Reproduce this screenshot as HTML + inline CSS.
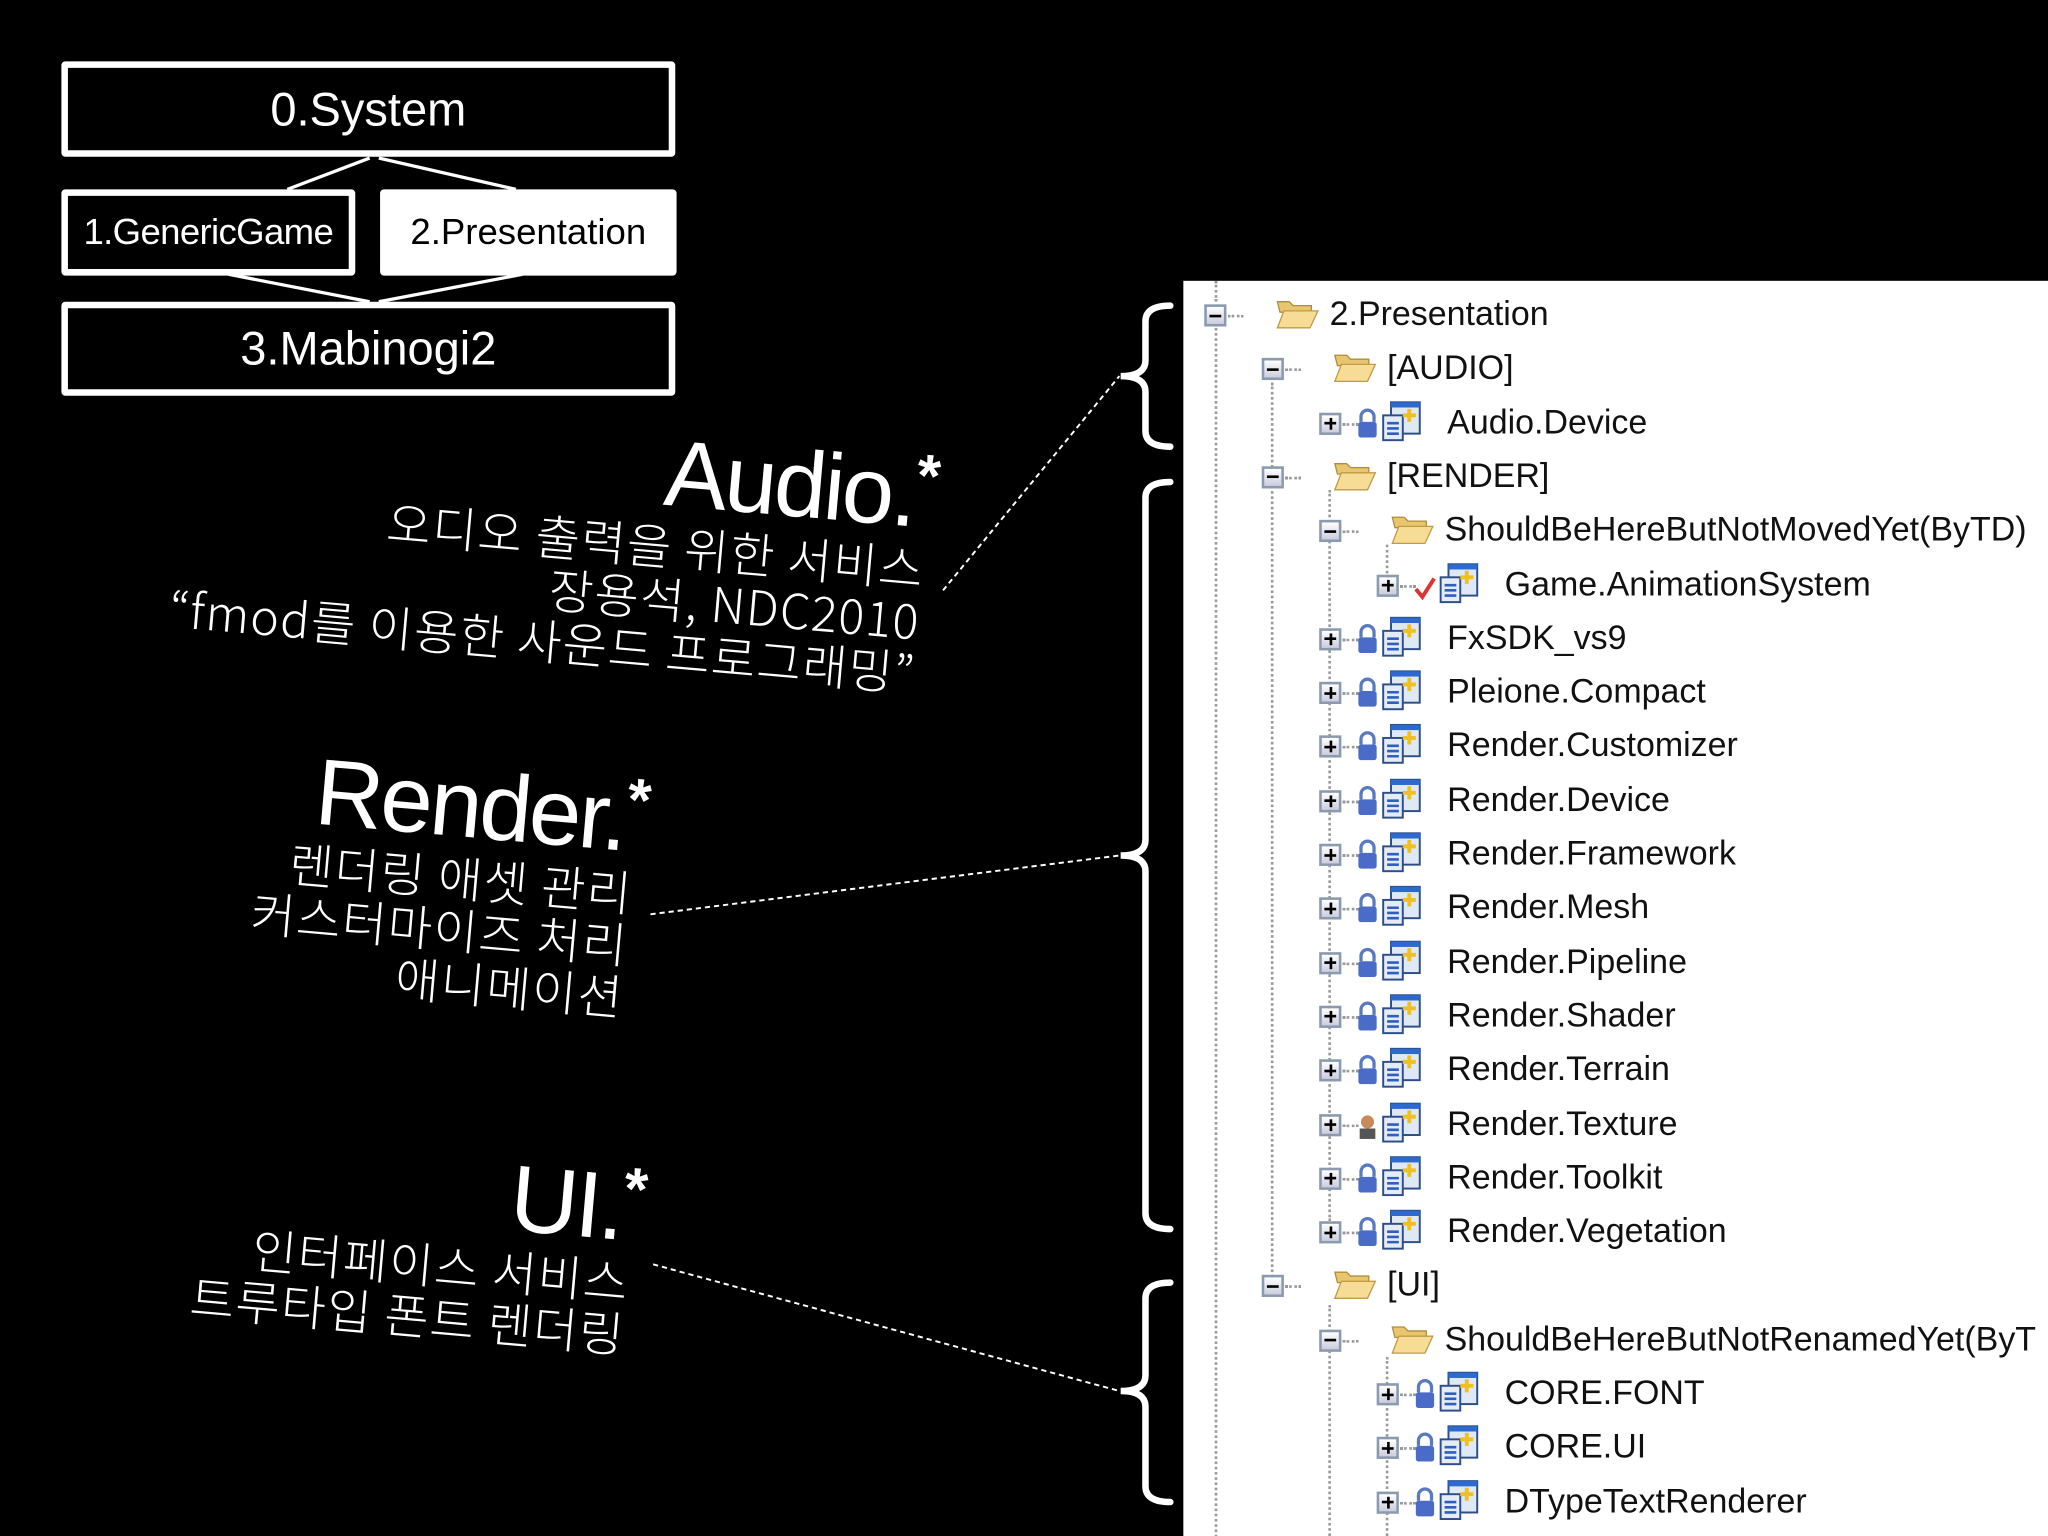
<!DOCTYPE html>
<html><head><meta charset="utf-8"><style>
html,body{margin:0;padding:0;background:#000;width:2048px;height:1536px;overflow:hidden}
#s{position:absolute;left:0;top:0;width:1568px;height:1176px;transform:scale(1.306122);transform-origin:0 0;font-family:"Liberation Sans","Noto Sans CJK KR",sans-serif;color:#fff}
.box{position:absolute;box-sizing:border-box;border:5px solid #fff;border-radius:3px;display:flex;align-items:center;justify-content:center;white-space:nowrap}
.blk{position:absolute;text-align:right;white-space:nowrap;transform-origin:100% 50%}
.ko{font-family:"Noto Sans CJK KR","Liberation Sans",sans-serif;font-weight:300;font-size:37px;line-height:40px;letter-spacing:1px}
.ttl{font-size:72px;font-weight:normal;line-height:68px;letter-spacing:-2px}
.st{font-size:46px;font-weight:bold;vertical-align:24px}
#tree{position:absolute;left:906px;top:215px;width:662px;height:961px;background:#fff;overflow:hidden;color:#111;font-size:26px}
.row{position:absolute;height:30px;line-height:30px;white-space:nowrap}
.ex{position:absolute;width:17px;height:17px;box-sizing:border-box;border:2px solid #8a9bb0;background:linear-gradient(#fff,#ccd);}
.ex::before{content:"";position:absolute;left:2px;right:2px;top:5.5px;height:2px;background:#000}
.ex.p::after{content:"";position:absolute;top:2px;bottom:2px;left:5.5px;width:2px;background:#000}
.vl{position:absolute;border-left:2px dotted #999;width:0}
.hl{position:absolute;border-top:2px dotted #999;height:0;width:12px}
</style></head><body><div id="s">
<div class="box" style="left:47px;top:47px;width:470px;height:73px;font-size:36px">0.System</div>
<div class="box" style="left:47px;top:145px;width:225px;height:66px;font-size:28px;letter-spacing:-0.5px">1.GenericGame</div>
<div class="box" style="left:291px;top:145px;width:227px;height:66px;font-size:28px;background:#fff;color:#000">2.Presentation</div>
<div class="box" style="left:47px;top:231px;width:470px;height:72px;font-size:36px">3.Mabinogi2</div>
<svg style="position:absolute;left:0;top:0" width="1568" height="1176">
<g stroke="#fff" stroke-width="2.5" fill="none">
<line x1="220" y1="145" x2="283" y2="121"/><line x1="395" y1="145" x2="290" y2="121"/>
<line x1="175" y1="210" x2="283" y2="231"/><line x1="400" y1="210" x2="290" y2="231"/>
</g>
<g stroke="#fff" stroke-width="1.5" stroke-dasharray="4,3" fill="none">
<line x1="722" y1="452" x2="857" y2="288"/>
<line x1="498" y1="700" x2="857" y2="655"/>
<line x1="500" y1="968" x2="857" y2="1065"/>
</g>
<g stroke="#fff" stroke-width="5" fill="none" stroke-linecap="round">
<path d="M896 234 Q877 234 877 246 L877 276 Q877 288 858 288 Q877 288 877 300 L877 330 Q877 342 896 342"/>
<path d="M896 369 Q877 369 877 381 L877 643 Q877 655 858 655 Q877 655 877 667 L877 929 Q877 941 896 941"/>
<path d="M896 982 Q877 982 877 994 L877 1053 Q877 1065 858 1065 Q877 1065 877 1077 L877 1138 Q877 1150 896 1150"/>
</g>
</svg>
<div class="blk" style="right:860px;top:330px;transform:rotate(5deg)">
<div class="ttl" style="margin-right:-4px">Audio.<span class="st">*</span></div>
<div class="ko">오디오 출력을 위한 서비스<br>장용석, NDC2010<br>“fmod를 이용한 사운드 프로그래밍”</div>
</div>
<div class="blk" style="right:1084px;top:578px;transform:rotate(5deg)">
<div class="ttl" style="margin-right:-6px">Render.<span class="st">*</span></div>
<div class="ko">렌더링 애셋 관리<br>커스터마이즈 처리<br>애니메이션</div>
</div>
<div class="blk" style="right:1084px;top:876px;transform:rotate(5deg)">
<div class="ttl" style="margin-right:-6px">UI.<span class="st">*</span></div>
<div class="ko">인터페이스 서비스<br>트루타입 폰트 렌더링</div>
</div>
<div id="tree">
<div class="vl" style="left:24px;top:0;height:16px"></div>
<div class="vl" style="left:24px;top:36px;height:930px"></div>
<div class="vl" style="left:67px;top:78px;height:700px"></div>
<div class="vl" style="left:111px;top:160px;height:560px"></div>
<div class="vl" style="left:155px;top:202px;height:30px"></div>
<div class="vl" style="left:111px;top:784px;height:180px"></div>
<div class="vl" style="left:155px;top:824px;height:140px"></div>
<svg width="0" height="0" style="position:absolute"><defs>
<g id="fold"><path d="M2 6 h9 l3 3 h14 v5 h-24z" fill="#e8c670" stroke="#b08d3a"/><path d="M2 26 l5 -13 h26 l-6 13z" fill="#f6dc94" stroke="#c19a45"/></g>
<g id="proj"><rect x="7" y="1" width="22" height="24" fill="#dfe8f5" stroke="#2c4e8a" stroke-width="1.5"/><rect x="7" y="1" width="22" height="4" fill="#2c6ad0"/><rect x="1" y="11" width="15" height="19" fill="#e6ecf6" stroke="#2c4e8a" stroke-width="1.5"/><path d="M4 17h9M4 21h9M4 25h9" stroke="#2c5fc0" stroke-width="2"/><path d="M21 6v10M16 11h10" stroke="#f0c020" stroke-width="3"/></g>
<g id="lock"><path d="M4 12 v-4 a5 5 0 0 1 10 0 v4" fill="none" stroke="#5a7ac0" stroke-width="2.5"/><rect x="2" y="12" width="14" height="12" rx="2" fill="#4a6cc8"/></g>
</defs></svg>
</div>
<script>
var rows=[[0,'m','f','2.Presentation'],[1,'m','f','[AUDIO]'],[2,'p','l','Audio.Device'],[1,'m','f','[RENDER]'],[2,'m','f','ShouldBeHereButNotMovedYet(ByTD)'],[3,'p','c','Game.AnimationSystem'],
[2,'p','l','FxSDK_vs9'],[2,'p','l','Pleione.Compact'],[2,'p','l','Render.Customizer'],[2,'p','l','Render.Device'],[2,'p','l','Render.Framework'],[2,'p','l','Render.Mesh'],[2,'p','l','Render.Pipeline'],[2,'p','l','Render.Shader'],[2,'p','l','Render.Terrain'],[2,'p','u','Render.Texture'],[2,'p','l','Render.Toolkit'],[2,'p','l','Render.Vegetation'],
[1,'m','f','[UI]'],[2,'m','f','ShouldBeHereButNotRenamedYet(ByT'],[3,'p','l','CORE.FONT'],[3,'p','l','CORE.UI'],[3,'p','l','DTypeTextRenderer']];
var t=document.getElementById('tree'),h='';
rows.forEach(function(r,i){var y=241+41.3*i-215,ex=16+44*r[0];
h+='<div class="ex '+(r[1]=='p'?'p':'')+'" style="left:'+ex+'px;top:'+(y-8)+'px"></div>';
h+='<div class="hl" style="left:'+(ex+18)+'px;top:'+y+'px"></div>';
var ic='';
if(r[2]=='f')ic='<svg style="position:absolute;left:'+(ex+54)+'px;top:'+(y-16)+'px" width="36" height="30"><use href="#fold"/></svg>';
else{var pre=r[2]=='l'?'<use href="#lock"/>':r[2]=='c'?'<path d="M2 16l5 6l9-14" stroke="#d33" stroke-width="3" fill="none"/>':'<circle cx="9" cy="11" r="5" fill="#c98a5a"/><rect x="3" y="16" width="12" height="8" fill="#555"/>';
ic='<svg style="position:absolute;left:'+(ex+28)+'px;top:'+(y-13)+'px" width="18" height="26">'+pre+'</svg><svg style="position:absolute;left:'+(ex+48)+'px;top:'+(y-17)+'px" width="32" height="32"><use href="#proj"/></svg>';}
h+=ic+'<div class="row" style="left:'+(ex+(r[2]=='f'?96:98))+'px;top:'+(y-16)+'px">'+r[3]+'</div>';});
t.insertAdjacentHTML('beforeend',h);
</script>
</div></body></html>
